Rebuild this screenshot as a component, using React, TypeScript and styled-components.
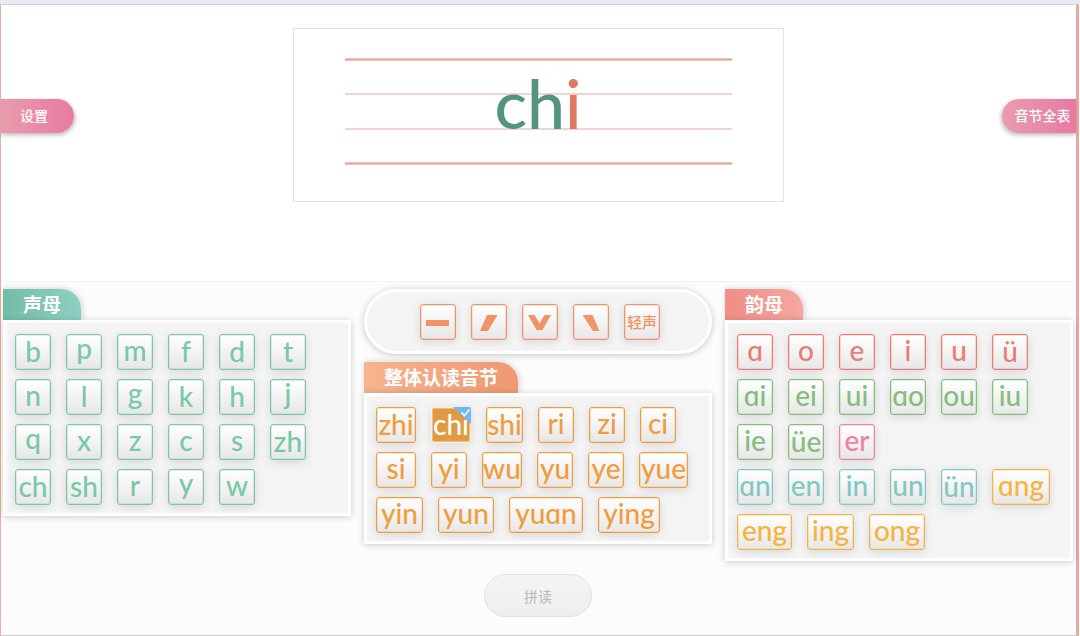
import React from 'react';
import styled, { createGlobalStyle, css } from 'styled-components';

const GlobalStyle = createGlobalStyle`
  * { box-sizing: border-box; }
  body {
    margin: 0;
    background: #fff;
    font-family: "Noto Sans CJK SC", sans-serif;
  }
  button { font-family: inherit; cursor: pointer; }
`;

const Page = styled.div`
  display: flex;
  flex-direction: column;
  min-height: 100vh;
  padding-right: 1px;
  border-top: 4px solid #e8ebf3;
`;

const Frame = styled.main`
  flex: 1;
  display: flex;
  flex-direction: column;
  border: solid;
  border-width: 1px 3px 1px 1px;
  border-color: #d2d2d4 #e9a99c #cfcfcf #eaaba1;
`;

const Stage = styled.section`
  display: flex;
  justify-content: space-between;
  align-items: flex-start;
  min-height: 276px;
  padding-top: 23px;
`;

const SideButton = styled.button<{ $side: 'left' | 'right' }>`
  width: 74px;
  height: 34px;
  margin-top: 71px;
  padding: 0 0 2px;
  border: 0;
  color: #fff;
  font-size: 14px;
  font-weight: 500;
  line-height: 32px;
  background: linear-gradient(90deg, #e99cae, #e87aa2);
  ${({ $side }) =>
    $side === 'left'
      ? css`
          margin-left: -1px;
          padding-right: 6px;
          border-radius: 0 17px 17px 0;
          box-shadow: 1px 2px 4px rgba(0, 0, 0, 0.28);
        `
      : css`
          padding-left: 7px;
          border-radius: 17px 0 0 17px;
          box-shadow: -1px 2px 4px rgba(0, 0, 0, 0.28);
        `}
`;

const Board = styled.div`
  width: 491px;
  height: 174px;
  padding: 29px 51px 0;
  border: 1px solid #e2e2e2;
  background: #fff;
`;

const Staff = styled.div`
  position: relative;
  display: flex;
  flex-direction: column;
  justify-content: space-between;
  height: 107px;
`;

const Rule = styled.div<{ $thick?: boolean }>`
  height: ${({ $thick }) => ($thick ? 3 : 2)}px;
  background: ${({ $thick }) =>
    $thick ? 'linear-gradient(#f0c3bb 1px, #e6a398 1px 2px, #f0c3bb 2px)' : '#f5d3ce'};
`;

const Syllable = styled.output`
  position: absolute;
  inset: 0;
  text-align: center;
  font-family: Lato, sans-serif;
  font-weight: 500;
  font-size: 68px;
  line-height: 90px;
  color: #55957f;
`;

const Final = styled.span`
  color: #e17860;
`;

const Keyboard = styled.section`
  flex: 1;
  margin: 0 3px 4px 2px;
  padding-top: 7px;
  border-top: 1px solid #f2f2f2;
  background: #fcfcfc;
`;

const Columns = styled.div`
  display: grid;
  grid-template-columns: repeat(3, minmax(0, 1fr));
  align-items: start;
  column-gap: 13px;
`;

const Column = styled.section`
  display: flex;
  flex-direction: column;
`;

const Tab = styled.h2<{ $from: string; $to: string }>`
  width: fit-content;
  height: 31px;
  margin: 0;
  padding: 0 20px;
  border-radius: 0 20px 0 0;
  color: #fff;
  font-size: 19px;
  line-height: 30px;
  font-weight: 700;
  background: linear-gradient(90deg, ${({ $from }) => $from}, ${({ $to }) => $to});
  box-shadow: 1px 0 6px rgba(0, 0, 0, 0.18);
`;

const Panel = styled.div`
  position: relative;
  display: flex;
  flex-direction: column;
  gap: 9px;
  padding: 11px 9px 8px;
  border: 3px solid #fff;
  background: #f4f4f4;
  box-shadow: 0 1px 7px rgba(0, 0, 0, 0.2);
`;

const Row = styled.div`
  display: flex;
  gap: 15px;
`;

const TonePill = styled.div`
  display: flex;
  justify-content: center;
  align-items: center;
  gap: 15px;
  height: 65px;
  margin-bottom: 8px;
  padding-left: 4px;
  border: 3px solid #fff;
  border-radius: 33px;
  background: #f4f4f4;
  box-shadow: 0 1px 7px rgba(0, 0, 0, 0.22);
`;

type Lift = 'tall' | 'level' | 'hanging';
const LINE_HEIGHT: Record<Lift, number> = { tall: 33, level: 30, hanging: 27 };

const Tile = styled.button<{ $color: string; $width?: number; $lift?: Lift; $on?: boolean }>`
  position: relative;
  display: flex;
  justify-content: center;
  align-items: flex-start;
  flex: none;
  width: ${({ $width = 36 }) => $width}px;
  height: 36px;
  padding: 0;
  border: 1px solid ${({ $color, $on }) => ($on ? '#fbf1e4' : $color)};
  border-radius: 3px;
  color: ${({ $color, $on }) => ($on ? '#fff' : $color)};
  font-family: Lato, sans-serif;
  font-weight: 500;
  font-size: 28px;
  line-height: ${({ $lift = 'level' }) => LINE_HEIGHT[$lift]}px;
  white-space: nowrap;
  background: ${({ $on }) => ($on ? '#e29a41' : 'linear-gradient(#fff, #e7e7e7)')};
  box-shadow:
    inset 0 0 0 1px ${({ $color, $on }) => ($on ? '#eebf85' : $color + '40')},
    0 2px 10px rgba(0, 0, 0, 0.12);
`;

const ToneTile = styled(Tile)`
  font-family: "Noto Sans CJK SC", sans-serif;
  font-size: 15px;
  line-height: 34px;
`;

const Corner = styled.svg`
  position: absolute;
  top: -1px;
  right: -1px;
`;

const ReadButton = styled.button`
  align-self: center;
  width: 108px;
  height: 43px;
  margin: 30px 0 12px;
  padding: 0;
  border: 1px solid #e2e2e2;
  border-radius: 22px;
  color: #b9b9b9;
  font-size: 14px;
  line-height: 40px;
  background: linear-gradient(#f4f4f4, #eeeeee);
`;

type Key = string | [string, number];
type KeyRow = { color: string; keys: Key[] }[];

const liftOf = (text: string): Lift => {
  if (/[bdfhkltü]/.test(text)) return 'tall';
  if (/^[gpqyj]$/.test(text)) return 'hanging';
  return 'level';
};

const TEAL = '#79c8a6';
const ORANGE = '#f09d3e';
const RED = '#ec7c73';
const GREEN = '#86bd7c';
const PINK = '#f280a6';
const AQUA = '#80c9c3';
const AMBER = '#f5b441';
const TONE = '#f09366';

const initials: KeyRow[] = [
  [{ color: TEAL, keys: ['b', 'p', 'm', 'f', 'd', 't'] }],
  [{ color: TEAL, keys: ['n', 'l', 'g', 'k', 'h', 'j'] }],
  [{ color: TEAL, keys: ['q', 'x', 'z', 'c', 's', 'zh'] }],
  [{ color: TEAL, keys: ['ch', 'sh', 'r', 'y', 'w'] }],
];

const wholes: KeyRow[] = [
  [{ color: ORANGE, keys: [['zhi', 40], ['chi', 40], ['shi', 37], 'ri', 'zi', 'ci'] }],
  [{ color: ORANGE, keys: [['si', 40], 'yi', ['wu', 40], 'yu', 'ye', ['yue', 49]] }],
  [{ color: ORANGE, keys: [['yin', 47], ['yun', 56], ['yuɑn', 74], ['ying', 62]] }],
];

const finals: KeyRow[] = [
  [{ color: RED, keys: ['ɑ', 'o', 'e', 'i', 'u', 'ü'] }],
  [{ color: GREEN, keys: ['ɑi', 'ei', 'ui', 'ɑo', 'ou', 'iu'] }],
  [{ color: GREEN, keys: ['ie', 'üe'] }, { color: PINK, keys: ['er'] }],
  [
    { color: AQUA, keys: ['ɑn', 'en', 'in', 'un', 'ün'] },
    { color: AMBER, keys: [['ɑng', 58]] },
  ],
  [{ color: AMBER, keys: [['eng', 55], ['ing', 47], ['ong', 56]] }],
];

const tones = [
  { name: '一声', points: '6,16 29,16 29,22 6,22' },
  { name: '二声', points: '16,11 26.5,11 17,27 9,27' },
  { name: '三声', points: '6,11 12.5,11 17.5,19.5 22.5,11 29,11 20.5,26 14.5,26' },
  { name: '四声', points: '9.5,11 19.5,11 26.5,27 20,27' },
];

function Keys({ rows, selected }: { rows: KeyRow[]; selected?: string }) {
  return (
    <Panel>
      {rows.map((groups, index) => (
        <Row key={index}>
          {groups.flatMap(({ color, keys }) =>
            keys.map((key) => {
              const [text, width] = typeof key === 'string' ? [key, undefined] : key;
              const on = text === selected;
              return (
                <Tile
                  key={text}
                  type="button"
                  aria-pressed={on}
                  $color={color}
                  $width={width}
                  $lift={liftOf(text)}
                  $on={on}
                >
                  {text}
                  {on && (
                    <Corner width="18" height="18" viewBox="0 0 18 18" aria-hidden="true">
                      <path d="M0 0h16a2 2 0 0 1 2 2v15z" fill="#72b9f0" />
                      <path d="M8.5 5.5l3 3 5-6" fill="none" stroke="#fff" strokeWidth="1.6" />
                    </Corner>
                  )}
                </Tile>
              );
            }),
          )}
        </Row>
      ))}
    </Panel>
  );
}

export default function App() {
  return (
    <>
      <GlobalStyle />
      <Page>
        <Frame>
          <Stage>
            <SideButton type="button" $side="left">设置</SideButton>
            <Board>
              <Staff>
                <Rule $thick />
                <Rule />
                <Rule />
                <Rule $thick />
                <Syllable>ch<Final>i</Final></Syllable>
              </Staff>
            </Board>
            <SideButton type="button" $side="right">音节全表</SideButton>
          </Stage>
          <Keyboard>
            <Columns>
              <Column>
                <Tab $from="#74bda5" $to="#8dd0c4">声母</Tab>
                <Keys rows={initials} />
              </Column>
              <Column>
                <TonePill>
                  {tones.map(({ name, points }) => (
                    <ToneTile key={name} type="button" aria-label={name} $color={TONE}>
                      <svg width="34" height="34" viewBox="1 1 34 34" aria-hidden="true">
                        <polygon points={points} fill={TONE} />
                      </svg>
                    </ToneTile>
                  ))}
                  <ToneTile type="button" $color={TONE}>轻声</ToneTile>
                </TonePill>
                <Tab $from="#f5b48f" $to="#f09872">整体认读音节</Tab>
                <Keys rows={wholes} selected="chi" />
                <ReadButton type="button" disabled>拼读</ReadButton>
              </Column>
              <Column>
                <Tab $from="#f08d86" $to="#f4a7a0">韵母</Tab>
                <Keys rows={finals} />
              </Column>
            </Columns>
          </Keyboard>
        </Frame>
      </Page>
    </>
  );
}
